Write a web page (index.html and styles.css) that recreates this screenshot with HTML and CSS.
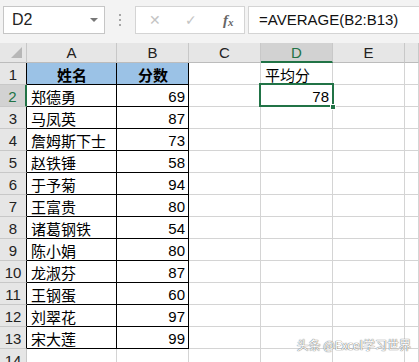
FILE: index.html
```html
<!DOCTYPE html>
<html lang="zh">
<head>
    <meta charset="UTF-8">
    <title>Excel - AVERAGE</title>
    <link rel="stylesheet" href="styles.css">
</head>
<body>
    <div class="toolbar">
        <div class="namebox">
            <span>D2</span>
            <span class="caret"></span>
        </div>
        <div class="grip"><i></i><i></i><i></i></div>
        <div class="buttons">
            <span class="btn">&#x2715;</span>
            <span class="btn">&#x2713;</span>
            <span class="fx">f<sub>x</sub></span>
        </div>
        <div class="formula">=AVERAGE(B2:B13)</div>
    </div>

    <div class="sheet">
        <!-- column headers -->
        <div class="hd corner"><span class="tri"></span></div>
        <div class="hd">A</div>
        <div class="hd">B</div>
        <div class="hd">C</div>
        <div class="hd sel-col">D</div>
        <div class="hd">E</div>
        <div class="hd"></div>

        <div class="rh">1</div>
        <div class="c t head">姓名</div>
        <div class="c t tb head">分数</div>
        <div class="c"></div>
        <div class="c">平均分</div>
        <div class="c"></div>
        <div class="c"></div>

        <div class="rh sel-row">2</div>
        <div class="c t">郑德勇</div>
        <div class="c t tb num">69</div>
        <div class="c"></div>
        <div class="c num active">78<span class="handle"></span></div>
        <div class="c"></div>
        <div class="c"></div>

        <div class="rh">3</div>
        <div class="c t">马凤英</div>
        <div class="c t tb num">87</div>
        <div class="c"></div><div class="c"></div><div class="c"></div><div class="c"></div>

        <div class="rh">4</div>
        <div class="c t">詹姆斯下士</div>
        <div class="c t tb num">73</div>
        <div class="c"></div><div class="c"></div><div class="c"></div><div class="c"></div>

        <div class="rh">5</div>
        <div class="c t">赵铁锤</div>
        <div class="c t tb num">58</div>
        <div class="c"></div><div class="c"></div><div class="c"></div><div class="c"></div>

        <div class="rh">6</div>
        <div class="c t">于予菊</div>
        <div class="c t tb num">94</div>
        <div class="c"></div><div class="c"></div><div class="c"></div><div class="c"></div>

        <div class="rh">7</div>
        <div class="c t">王富贵</div>
        <div class="c t tb num">80</div>
        <div class="c"></div><div class="c"></div><div class="c"></div><div class="c"></div>

        <div class="rh">8</div>
        <div class="c t">诸葛钢铁</div>
        <div class="c t tb num">54</div>
        <div class="c"></div><div class="c"></div><div class="c"></div><div class="c"></div>

        <div class="rh">9</div>
        <div class="c t">陈小娟</div>
        <div class="c t tb num">80</div>
        <div class="c"></div><div class="c"></div><div class="c"></div><div class="c"></div>

        <div class="rh">10</div>
        <div class="c t">龙淑芬</div>
        <div class="c t tb num">87</div>
        <div class="c"></div><div class="c"></div><div class="c"></div><div class="c"></div>

        <div class="rh">11</div>
        <div class="c t">王钢蛋</div>
        <div class="c t tb num">60</div>
        <div class="c"></div><div class="c"></div><div class="c"></div><div class="c"></div>

        <div class="rh">12</div>
        <div class="c t">刘翠花</div>
        <div class="c t tb num">97</div>
        <div class="c"></div><div class="c"></div><div class="c"></div><div class="c"></div>

        <div class="rh">13</div>
        <div class="c t">宋大莲</div>
        <div class="c t tb num">99</div>
        <div class="c"></div><div class="c"></div><div class="c"></div><div class="c"></div>

        <div class="rh">14</div>
        <div class="c"></div><div class="c"></div><div class="c"></div><div class="c"></div><div class="c"></div><div class="c"></div>
    </div>

    <div class="watermark">头条 @Excel学习世界</div>
</body>
</html>
```

FILE: styles.css
```css
* {
    margin: 0;
    padding: 0;
    box-sizing: border-box;
}
body {
    width: 419px;
    height: 362px;
    overflow: hidden;
    position: relative;
    background: #fff;
    font-family: "Liberation Sans", "Noto Sans CJK SC", sans-serif;
    color: #000;
}

/* formula bar */
.toolbar {
    height: 43px;
    background: #f3f3f3;
    display: flex;
    align-items: flex-start;
    padding: 6px 0 0 3px;
}
.namebox {
    width: 102px;
    height: 28px;
    background: #fff;
    border: 1px solid #c6c6c6;
    display: flex;
    align-items: center;
    justify-content: space-between;
    padding: 0 6px 0 8px;
    font-size: 16px;
    color: #222;
}
.caret {
    width: 0;
    height: 0;
    border-left: 4px solid transparent;
    border-right: 4px solid transparent;
    border-top: 4px solid #777;
}
.grip {
    width: 30px;
    height: 28px;
    display: flex;
    flex-direction: column;
    align-items: center;
    justify-content: center;
    gap: 3px;
}
.grip i {
    width: 2px;
    height: 2px;
    background: #a6a6a6;
}
.buttons {
    width: 110px;
    height: 28px;
    background: #fff;
    border: 1px solid #d4d4d4;
    display: flex;
    align-items: center;
    padding-left: 13px;
}
.btn {
    width: 36px;
    font-size: 14px;
    color: #c4c4c4;
    font-family: "DejaVu Sans", sans-serif;
}
.fx {
    font-family: "Liberation Serif", serif;
    font-style: italic;
    font-weight: bold;
    font-size: 15px;
    color: #666;
    margin-left: 2px;
}
.fx sub {
    font-size: 11px;
    vertical-align: -1px;
}
.formula {
    flex: 1;
    height: 28px;
    margin-left: 3px;
    background: #fff;
    border: 1px solid #d4d4d4;
    border-right: none;
    font-size: 15px;
    line-height: 26px;
    padding-left: 10px;
    color: #111;
    white-space: nowrap;
}

/* sheet grid */
.sheet {
    display: grid;
    grid-template-columns: 27px 90px 72px 72px 72px 72px 1fr;
    grid-template-rows: 20px repeat(14, 22px);
}
.hd {
    background: #e6e6e6;
    border-right: 1px solid #c8c8c8;
    border-bottom: 1px solid #bcbcbc;
    text-align: center;
    font-size: 15px;
    line-height: 19px;
    color: #222;
}
.corner {
    position: relative;
}
.tri {
    position: absolute;
    right: 4px;
    bottom: 4px;
    width: 0;
    height: 0;
    border-left: 11px solid transparent;
    border-bottom: 11px solid #b7b7b7;
}
.sel-col {
    background: #d2d2d2;
    border-bottom: 2px solid #217346;
    color: #217346;
}
.rh {
    background: #e6e6e6;
    border-right: 1px solid #000;
    border-bottom: 1px solid #c8c8c8;
    text-align: center;
    font-size: 15px;
    line-height: 24px;
    color: #222;
}
.sel-row {
    background: #d2d2d2;
    border-right: 2px solid #217346;
    color: #217346;
}
.rh:nth-last-child(7) {
    border-right-color: #c8c8c8;
}
.c {
    border-right: 1px solid #d4d4d4;
    border-bottom: 1px solid #d4d4d4;
    font-size: 15px;
    line-height: 23px;
    padding: 0 3px 0 4px;
    white-space: nowrap;
    font-family: "Noto Sans CJK SC", "Liberation Sans", sans-serif;
}
.c.t {
    border-bottom-color: #000;
    border-right-color: #000;
}
.head {
    background: #9bc2e6;
    text-align: center;
    font-weight: bold;
}
.num {
    text-align: right;
    font-family: "Liberation Sans", sans-serif;
    padding-right: 3px;
}
.active {
    position: relative;
}
.active::after {
    content: "";
    position: absolute;
    top: -2px;
    left: -2px;
    right: -2px;
    bottom: -1px;
    border: 2px solid #217346;
}
.handle {
    position: absolute;
    right: -4px;
    bottom: -4px;
    width: 6px;
    height: 6px;
    background: #217346;
    border: 1px solid #fff;
    z-index: 1;
}

/* watermark overlay */
.watermark {
    position: absolute;
    right: 8px;
    bottom: 9px;
    font-family: "Noto Sans CJK SC", sans-serif;
    font-size: 12px;
    color: #fff;
    text-shadow: 0 0 1px #666, 0 0 1px #666;
}
```
